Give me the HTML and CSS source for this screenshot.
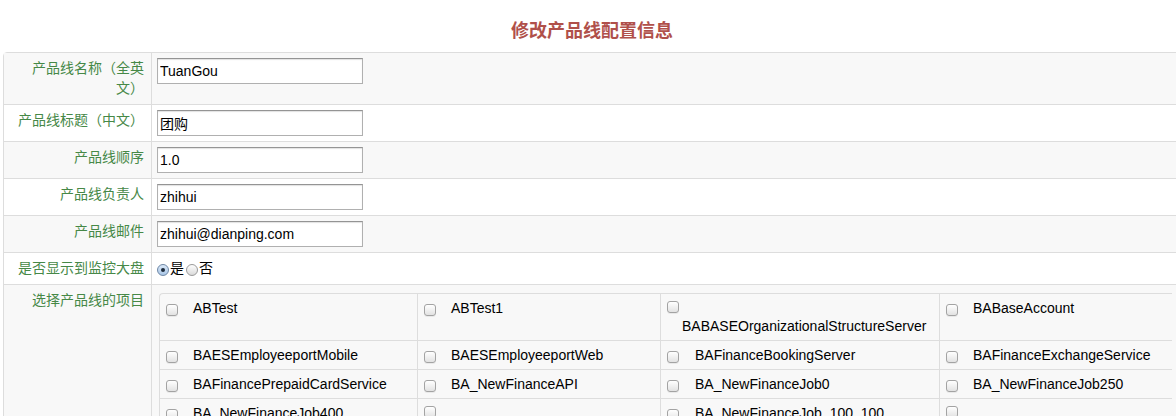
FILE: index.html
```html
<!DOCTYPE html>
<html lang="zh-CN">
<head>
<meta charset="utf-8">
<title>修改产品线配置信息</title>
<link rel="stylesheet" href="styles.css">
</head>
<body>
<div class="page">
  <h3 class="title">修改产品线配置信息</h3>
  <table class="form-table">
    <tbody>
      <tr>
        <td class="label">产品线名称（全英文）</td>
        <td class="value"><input class="field" type="text" value="TuanGou"></td>
      </tr>
      <tr>
        <td class="label">产品线标题（中文）</td>
        <td class="value"><input class="field" type="text" value="团购"></td>
      </tr>
      <tr>
        <td class="label">产品线顺序</td>
        <td class="value"><input class="field" type="text" value="1.0"></td>
      </tr>
      <tr>
        <td class="label">产品线负责人</td>
        <td class="value"><input class="field" type="text" value="zhihui"></td>
      </tr>
      <tr>
        <td class="label">产品线邮件</td>
        <td class="value"><input class="field" type="text" value="zhihui@dianping.com"></td>
      </tr>
      <tr>
        <td class="label">是否显示到监控大盘</td>
        <td class="value radios"><span class="radio on"></span>是<span class="radio second"></span>否</td>
      </tr>
      <tr>
        <td class="label">选择产品线的项目</td>
        <td class="value">
          <table class="items">
            <tbody>
              <tr>
                <td><span class="cb"></span><span class="nm">ABTest</span></td>
                <td><span class="cb"></span><span class="nm">ABTest1</span></td>
                <td class="wrap"><span class="cb"></span><span class="nm">BABASEOrganizationalStructureServer</span></td>
                <td><span class="cb"></span><span class="nm">BABaseAccount</span></td>
              </tr>
              <tr>
                <td><span class="cb"></span><span class="nm">BAESEmployeeportMobile</span></td>
                <td><span class="cb"></span><span class="nm">BAESEmployeeportWeb</span></td>
                <td><span class="cb"></span><span class="nm wide">BAFinanceBookingServer</span></td>
                <td><span class="cb"></span><span class="nm">BAFinanceExchangeService</span></td>
              </tr>
              <tr>
                <td><span class="cb"></span><span class="nm">BAFinancePrepaidCardService</span></td>
                <td><span class="cb"></span><span class="nm">BA_NewFinanceAPI</span></td>
                <td><span class="cb"></span><span class="nm wide">BA_NewFinanceJob0</span></td>
                <td><span class="cb"></span><span class="nm">BA_NewFinanceJob250</span></td>
              </tr>
              <tr>
                <td><span class="cb"></span><span class="nm">BA_NewFinanceJob400</span></td>
                <td class="wrap"><span class="cb"></span><span class="nm">BA_NewFinanceJob_OrganizationalSync</span></td>
                <td><span class="cb"></span><span class="nm wide">BA_NewFinanceJob_100_100</span></td>
                <td class="wrap"><span class="cb"></span><span class="nm">BA_NewFinanceSettlementService</span></td>
              </tr>
            </tbody>
          </table>
        </td>
      </tr>
    </tbody>
  </table>
</div>
</body>
</html>
```
FILE: styles.css
```css
html, body {
  margin: 0;
  padding: 0;
  overflow: hidden;
  background: #fff;
}

body {
  font-family: "Liberation Sans", Arial, "Noto Sans CJK SC", sans-serif;
  font-size: 14px;
  line-height: 20px;
  color: #333;
  text-spacing-trim: space-all;
}

.page {
  width: 1178px;
  padding-left: 3px;
}

.title {
  margin: 0 0 9px 0;
  padding-top: 19px;
  height: 24px;
  line-height: 24px;
  text-align: center;
  font-family: "Liberation Sans", "Noto Sans CJK SC", sans-serif;
  font-size: 18px;
  font-weight: bold;
  color: #b0504a;
}

.form-table {
  width: 1178px;
  border-collapse: separate;
  border-spacing: 0;
  border: 1px solid #ddd;
  border-radius: 4px 0 0 0;
  table-layout: fixed;
}

.form-table > tbody > tr > td {
  box-sizing: border-box;
  vertical-align: top;
}

.form-table > tbody > tr + tr > td {
  border-top: 1px solid #ddd;
}

.form-table > tbody > tr:nth-child(odd) > td {
  background: #f8f8f8;
}

.label {
  width: 147px;
  padding: 5px 7px 6px 8px;
  text-align: right;
  color: #468847;
}

.value {
  padding: 5px 5px 5px 5px;
  border-left: 1px solid #ddd;
}

.field {
  display: block;
  box-sizing: border-box;
  width: 206px;
  height: 26px;
  margin: 0;
  padding: 0 2px;
  border: 1px solid #b0b0b0;
  border-top-color: #949494;
  box-shadow: inset 0 1px 1px rgba(0, 0, 0, 0.12);
  background: #fff;
  font-family: "Liberation Sans", Arial, "Noto Sans CJK SC", sans-serif;
  font-size: 14px;
  color: #000;
  outline: none;
}

.radios {
  color: #000;
}

.radio {
  display: inline-block;
  position: relative;
  box-sizing: border-box;
  width: 12px;
  height: 12px;
  margin-right: 1px;
  border-radius: 50%;
  border: 1px solid #9a9a9a;
  background: linear-gradient(#fefefe, #dadada);
  vertical-align: -3px;
}

.radio.second {
  margin-left: 2px;
}

.radio.on {
  border-color: #6d87a6;
  background: linear-gradient(#dbe9f8, #a9c6e6);
}

.radio.on::after {
  content: "";
  position: absolute;
  left: 3px;
  top: 3px;
  width: 4px;
  height: 4px;
  border-radius: 50%;
  background: #1d2b3c;
}

.items {
  width: 1013px;
  margin: 3px 0 0 2px;
  border-collapse: separate;
  border-spacing: 0;
  border-top: 1px solid #ddd;
  border-left: 1px solid #ddd;
  border-radius: 4px 0 0 0;
  table-layout: fixed;
}

.items td {
  box-sizing: border-box;
  padding: 5px 6px;
  line-height: 18px;
  vertical-align: top;
  color: #000;
  white-space: nowrap;
}

.items tr + tr td {
  border-top: 1px solid #ddd;
}

.items td + td {
  border-left: 1px solid #ddd;
}

.items td:nth-child(1) { width: 257px; }
.items td:nth-child(2) { width: 243px; }
.items td:nth-child(3) { width: 279px; }
.items td:nth-child(4) { width: 233px; }

.cb {
  display: inline-block;
  box-sizing: border-box;
  width: 12px;
  height: 12px;
  border: 1px solid #a3a3a3;
  border-radius: 3px;
  background: linear-gradient(#ffffff, #e2e2e2);
  box-shadow: 0 1px 0 rgba(0, 0, 0, 0.06);
  vertical-align: -3px;
}

.nm {
  padding-left: 15px;
}

.nm.wide {
  padding-left: 16px;
}

.wrap .cb {
  vertical-align: 0;
}

.wrap .nm {
  display: block;
}
```
